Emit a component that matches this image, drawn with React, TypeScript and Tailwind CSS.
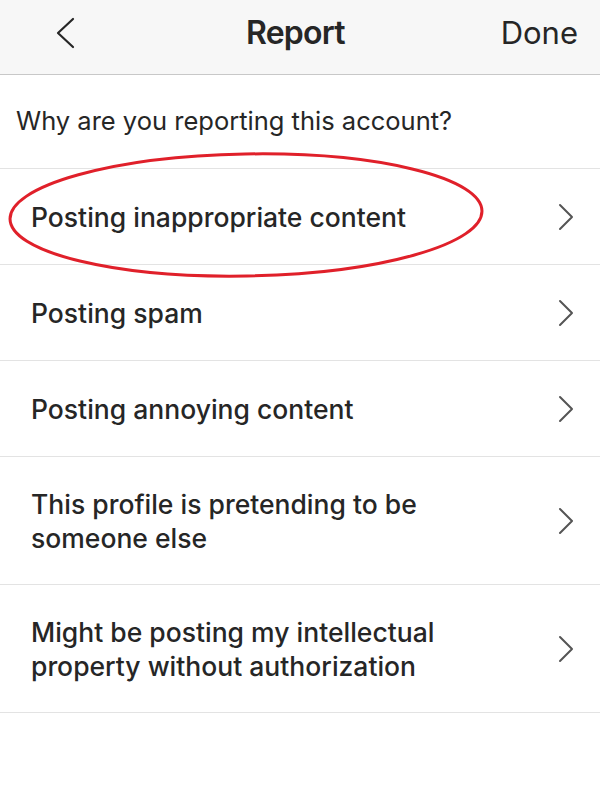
const reasons = [
  'Posting inappropriate content',
  'Posting spam',
  'Posting annoying content',
  'This profile is pretending to be someone else',
  'Might be posting my intellectual property without authorization',
]

function Chevron({ dir, className }: { dir: 'left' | 'right'; className?: string }) {
  return dir === 'right' ? (
    <svg width="16" height="28" viewBox="0 0 16 28" className={className}>
      <polyline points="2,2 14,14 2,26" fill="none" stroke="currentColor" strokeWidth="2" strokeLinecap="round" strokeLinejoin="round" />
    </svg>
  ) : (
    <svg width="22" height="32" viewBox="0 0 22 32" className={className}>
      <polyline points="19,2 4,16 19,30" fill="none" stroke="currentColor" strokeWidth="2.2" strokeLinecap="round" strokeLinejoin="round" />
    </svg>
  )
}

export default function App() {
  return (
    <div className="relative w-[600px] h-[800px] bg-white text-[#262626]" style={{ fontFamily: 'Inter, "Noto Sans", sans-serif' }}>
      <header className="h-[75px] flex items-center justify-between bg-[#f7f7f7] border-b border-[#c8c8c8] pl-[54px] pr-[22px] pb-[8px]">
        <Chevron dir="left" className="text-[#262626]" />
        <h1 className="text-[32px] font-semibold tracking-tight ml-[14px]">Report</h1>
        <span className="text-[31px] font-normal">Done</span>
      </header>

      <div className="h-[94px] flex items-center px-4 border-b border-[#e3e3e3]">
        <p className="text-[25.5px]">Why are you reporting this account?</p>
      </div>

      <ul>
        {reasons.map(r => (
          <li key={r} className={`flex items-center justify-between pl-[31px] pr-[26px] border-b border-[#e3e3e3] ${r.length > 30 ? 'h-[128px]' : 'h-[96px]'}`}>
            <span className="text-[26.5px] font-medium leading-[34px] max-w-[430px]">{r}</span>
            <Chevron dir="right" className="text-[#555]" />
          </li>
        ))}
      </ul>

      <svg className="absolute left-0 top-0 pointer-events-none" width="600" height="800">
        <ellipse cx="246" cy="215" rx="236" ry="61" fill="none" stroke="#e0202a" strokeWidth="3" transform="rotate(-1 246 215)" />
      </svg>
    </div>
  )
}
